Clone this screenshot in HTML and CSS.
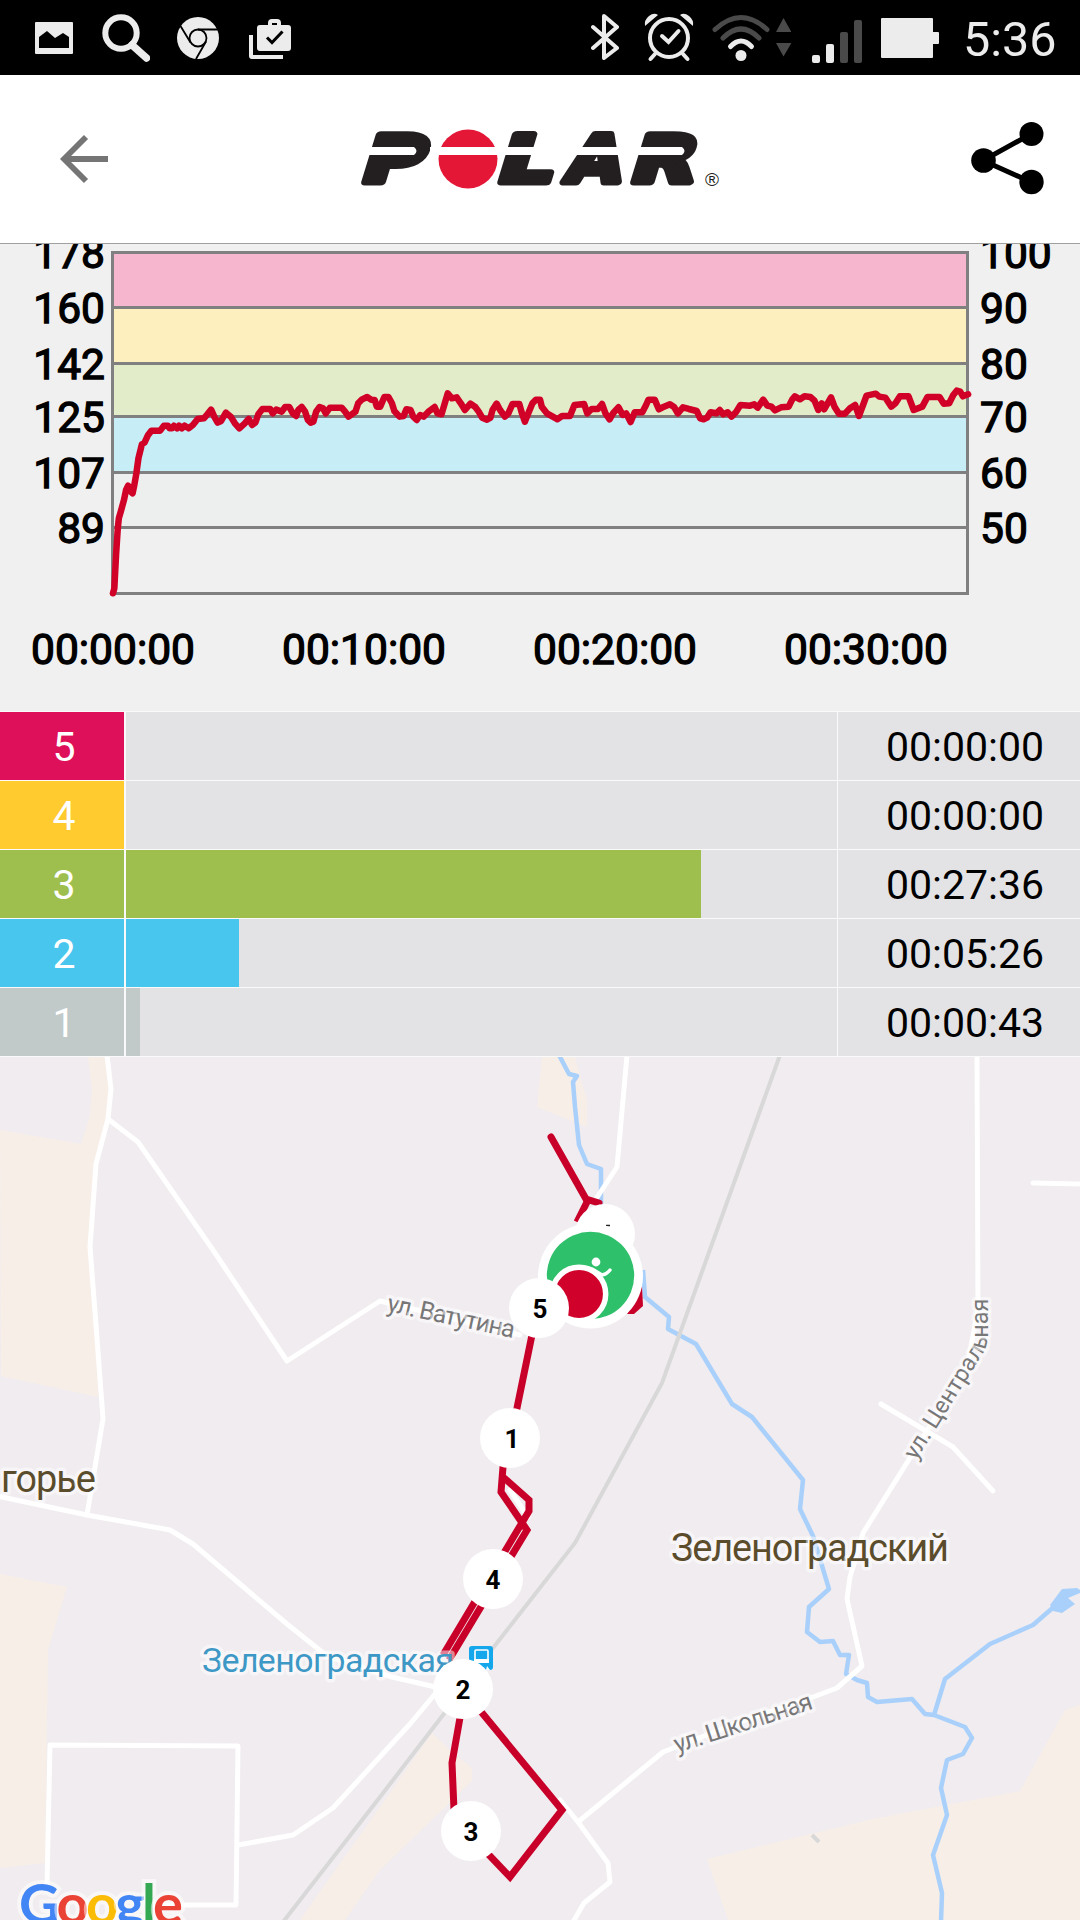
FILE: index.html
```html
<!DOCTYPE html>
<html lang="ru">
<head>
  <meta charset="UTF-8" />
  <title>Polar</title>
  <link rel="stylesheet" href="styles.css">
</head>
<body>
  <div class="statusbar">
    <div class="notifications">
      <svg class="ic-picture" width="38" height="75" viewBox="35 0 38 75"><path fill-rule="evenodd" d="M36 22h36a1 1 0 0 1 1 1v30a1 1 0 0 1-1 1H36a1 1 0 0 1-1-1V23a1 1 0 0 1 1-1zM39 48h30V37l-6-4-8 5-8-7-8 6z"/></svg>
      <svg class="ic-search" width="48" height="75" viewBox="102 0 48 75"><circle cx="121" cy="33" r="15.7" fill="none" stroke="#ececec" stroke-width="6"/><path d="M132 45l14.500 13" stroke="#ececec" stroke-width="7.500" stroke-linecap="round"/></svg>
      <svg class="ic-chrome" width="42" height="75" viewBox="177 0 42 75"><circle cx="198" cy="38" r="21"/><g fill="none" stroke="#000" stroke-width="1.8"><circle cx="198" cy="38" r="8.500"/><path d="M198 29.500h21M190.500 42.500L180.500 26M206 41.500L196 59"/></g></svg>
      <svg class="ic-work" width="43" height="75" viewBox="249 0 43 75"><path fill-rule="evenodd" d="M249 35h4v20h30v4h-31a3 3 0 0 1-3-3zM268 25v-2q0-4 4-4h5q4 0 4 4v2h7a3 3 0 0 1 3 3v20a3 3 0 0 1-3 3h-28a3 3 0 0 1-3-3V28a3 3 0 0 1 3-3zM272 25h5v-2h-5z"/><path d="M267 37.500l5 5 10.500-11" fill="none" stroke="#000" stroke-width="3"/></svg>
    </div>
    <div class="system">
      <svg class="ic-bt" width="28" height="75" viewBox="591 0 28 75"><path d="M593 27l24 21-13 10V16l13 11-24 21" fill="none" stroke="#ececec" stroke-width="4" stroke-linejoin="round" stroke-linecap="round"/></svg>
      <svg class="ic-alarm" width="50" height="75" viewBox="644 0 50 75"><g fill="none" stroke="#ececec" stroke-width="4" stroke-linecap="round"><circle cx="669" cy="38" r="19"/><path d="M655 54l-4.500 5M683 54l4.500 5"/><path d="M662 36l6.500 6 10-11"/></g><path d="M645 26q-1-6 4-10t9-1zM693 26q1-6-4-10t-9-1z"/></svg>
      <svg class="ic-wifi" width="58" height="75" viewBox="712 0 58 75"><circle cx="741" cy="55.500" r="5.500"/><g fill="none" stroke-width="5" stroke-linecap="round"><path d="M730.500 46.500q10.500-11 21 0" stroke="#ececec"/><path d="M723 38q18-18 36 0M715 29.500q26-24 52 0" stroke="#4a4a4a"/></g></svg>
      <svg class="ic-data" width="16" height="75" viewBox="775 0 16 75"><path fill="#4a4a4a" d="M783.500 18l8 14h-15.500zM776 43h15.500l-8 13.500z"/></svg>
      <svg class="ic-signal" width="50" height="75" viewBox="812 0 50 75"><rect x="812" y="55" width="8" height="8" rx="2"/><rect x="826" y="44" width="8" height="19" rx="2"/><g fill="#4a4a4a"><rect x="840" y="32" width="8" height="31" rx="2"/><rect x="854" y="20" width="8" height="43" rx="2"/></g></svg>
      <svg class="ic-battery" width="58" height="75" viewBox="881 0 58 75"><rect x="881" y="18" width="52" height="40" rx="1"/><rect x="932" y="32" width="7" height="12" rx="1"/></svg>
      <span class="clock">5:36</span>
    </div>
  </div>

  <header class="topbar">
    <svg class="back" width="48" height="50" viewBox="60 134 48 50"><path d="M108 159H64M86 137l-22 22 22 22" fill="none" stroke="#757575" stroke-width="5.800"/></svg>
    <svg class="logo" width="358" height="78" viewBox="361 119.500 358 78">
      <g class="logo-letters">
        <text transform="translate(358 181.500) skewX(-17) scale(1.290 1)">P</text>
        <text transform="translate(494 181.500) skewX(-17) scale(1.330 1)">L</text>
        <text transform="translate(563 181.500) skewX(-14) scale(1.100 1)">A</text>
        <text transform="translate(627 181.500) skewX(-17) scale(1.280 1)">R</text>
      </g>
      <circle cx="468" cy="158.500" r="29.500" fill="#e41737"/>
      <path d="M361 146.500h53q5 4 0 8h-53zM430 146.500h192v8H430zM622 146.500h60q5 4 0 8h-60z" fill="#fff"/>
      <text class="reg" x="705" y="185">®</text>
    </svg>
    <svg class="share" width="73" height="74" viewBox="971 122 73 74"><path d="M1031 134l-48 26.500 48 21.500" fill="none" stroke="#000" stroke-width="5"/><circle cx="983.500" cy="160.500" r="12.300"/><circle cx="1031.500" cy="134" r="12"/><circle cx="1031.500" cy="182" r="12.200"/></svg>
  </header>

  <svg class="chart" width="1080" height="467" viewBox="0 244 1080 467">
    <rect x="112.500" y="252.500" width="855" height="55" fill="#f5b6ce"/>
    <rect x="112.500" y="307.500" width="855" height="56" fill="#feefbf"/>
    <rect x="112.500" y="363.500" width="855" height="53" fill="#e2ecc9"/>
    <rect x="112.500" y="416.500" width="855" height="56" fill="#c7eef7"/>
    <rect x="112.500" y="472.500" width="855" height="55" fill="#edefee"/>
    <path class="grid" d="M112.500 252.500h855v341h-855zM112.500 307.500h855M112.500 363.500h855M112.500 416.500h855M112.500 472.500h855M112.500 527.500h855"/>
    <g class="axis axis-left">
      <text x="105" y="268">178</text>
      <text x="105" y="323">160</text>
      <text x="105" y="379">142</text>
      <text x="105" y="432">125</text>
      <text x="105" y="488">107</text>
      <text x="105" y="543">89</text>
    </g>
    <g class="axis">
      <text x="980" y="268">100</text>
      <text x="980" y="323">90</text>
      <text x="980" y="379">80</text>
      <text x="980" y="432">70</text>
      <text x="980" y="488">60</text>
      <text x="980" y="543">50</text>
    </g>
    <g class="axis axis-time">
      <text x="113" y="663.500">00:00:00</text>
      <text x="364" y="663.500">00:10:00</text>
      <text x="615" y="663.500">00:20:00</text>
      <text x="866" y="663.500">00:30:00</text>
    </g>
    <!-- heart rate -->
    <polyline class="pulse" transform="translate(0 235) scale(.3444 .3333)" points="328,1075 332,1060 337,960 342,880 345,850 352,825 360,795 366,765 372,752 378,768 385,775 390,750 396,715 402,670 412,628 420,622 430,600 440,587 465,587 476,572 488,572 492,580 500,580 505,572 514,580 520,572 528,580 536,572 548,580 560,570 574,552 592,550 602,538 613,524 622,545 632,563 642,558 656,533 670,545 682,565 695,580 710,566 722,552 732,570 742,562 750,538 762,522 785,522 792,535 802,524 818,530 828,516 840,516 850,535 860,543 866,525 876,516 886,530 894,555 902,563 910,560 918,530 928,516 938,520 946,535 958,518 992,518 1002,530 1012,545 1032,530 1040,505 1050,494 1066,486 1078,494 1088,495 1094,515 1104,515 1116,486 1128,486 1138,505 1145,528 1160,545 1172,543 1180,523 1192,525 1200,545 1210,555 1220,540 1230,545 1244,530 1252,524 1262,516 1270,535 1282,538 1290,510 1300,475 1312,490 1326,487 1338,505 1350,525 1366,506 1380,516 1390,530 1400,548 1414,554 1424,548 1430,525 1442,506 1452,525 1466,545 1476,535 1488,507 1508,507 1514,530 1524,560 1534,535 1546,505 1556,494 1568,494 1573,515 1588,535 1605,545 1618,553 1632,543 1655,543 1668,510 1696,507 1705,535 1718,522 1736,522 1748,507 1758,535 1770,553 1780,535 1796,517 1808,540 1818,535 1831,561 1843,532 1865,532 1876,510 1883,494 1901,494 1913,523 1928,515 1945,508 1958,517 1968,535 1983,517 2000,522 2023,528 2033,550 2043,553 2053,548 2063,532 2080,535 2090,525 2100,538 2113,532 2124,545 2138,530 2150,510 2178,512 2190,508 2200,518 2216,494 2228,512 2240,515 2250,526 2268,517 2290,515 2300,494 2308,484 2323,493 2336,484 2353,486 2365,497 2376,525 2386,505 2393,523 2413,487 2423,515 2436,536 2453,536 2468,520 2483,510 2494,543 2506,510 2516,482 2543,476 2553,485 2571,488 2588,515 2600,505 2613,484 2638,484 2653,525 2678,515 2693,486 2728,486 2740,506 2756,505 2768,480 2778,467 2788,470 2796,484 2811,478"/>
  </svg>

  <div class="zones">
    <div class="zone z5"><div class="num">5</div><div class="track"></div><div class="time">00:00:00</div></div>
    <div class="zone z4"><div class="num">4</div><div class="track"></div><div class="time">00:00:00</div></div>
    <div class="zone z3"><div class="num">3</div><div class="track"><div class="bar" style="width: 575px"></div></div><div class="time">00:27:36</div></div>
    <div class="zone z2"><div class="num">2</div><div class="track"><div class="bar" style="width: 113px"></div></div><div class="time">00:05:26</div></div>
    <div class="zone z1"><div class="num">1</div><div class="track"><div class="bar" style="width: 14px"></div></div><div class="time">00:00:43</div></div>
  </div>

  <svg class="map" width="1080" height="863" viewBox="0 1057 1080 863">
    <!-- fields -->
    <g fill="#f7eee8">
      <path d="M0 1130l81 14 9-28 2-26-4-33h19l4 32-3 30-12 45-6 83 7 90 1 60-97-21z"/>
      <path d="M0 1574l67 13-19 63-3 213-45 5z"/>
      <path d="M432 1733l20 19 20 16v13l-92 89-35 50h-45z"/>
      <path d="M542 1057l-5 50 50 20v-27l-7-24-5-19z"/>
      <path d="M707 1859l166-40 147-28 45-81 15-5v215H728z"/>
    </g>
    <!-- water -->
    <g class="river">
      <polyline points="559,1055 569,1074 577,1076 573,1082 575,1107 579,1145 587,1164 601,1169 601,1205"/>
      <polyline points="643,1270 645,1297 669,1317 668,1329 696,1344 732,1404 752,1417 803,1480 800,1509 813,1536 829,1589 809,1607 807,1632 820,1642 833,1641 840,1655 849,1655 846,1674 857,1680 867,1683 868,1697 877,1702 912,1699 925,1714 934,1715 965,1727 972,1738 963,1754 947,1760 941,1788 947,1815 933,1855 942,1893 941,1922"/>
      <polyline points="934,1715 945,1679 990,1644 1033,1625 1056,1605"/>
    </g>
    <path fill="#a9d0fb" d="M1050 1605l12-16 15-1 3 2v3l-12 5 7 6-13 9-9-2z"/>
    <!-- railway -->
    <g class="rail">
      <polyline points="780,1055 662,1383 575,1543 493,1648 443,1715 380,1797 283,1922"/>
      <path d="M812 1835l7 7"/>
    </g>
    <!-- roads -->
    <g class="road">
      <polyline points="107,1055 111,1089 108,1119 96,1164 90,1247 97,1338 103,1419 87,1515"/>
      <polyline points="108,1119 138,1142 213,1250 287,1361 380,1301 520,1335"/>
      <polyline points="-3,1496 87,1515 170,1530 193,1544 287,1624 327,1656 392,1677 440,1688 410,1724 333,1808 293,1835 238,1845"/>
      <polyline points="47,1885 50,1745 238,1746 236,1905 150,1905"/>
      <polyline points="627,1055 617,1167 596,1199"/>
      <polyline points="977,1055 978,1310 967,1367 908,1461 863,1533 850,1577 847,1599 862,1666 837,1688 813,1697 740,1722 663,1752 578,1822"/>
      <polyline points="560,1800 578,1822 608,1863 610,1882 584,1903 573,1922"/>
      <polyline points="881,1404 923,1429 953,1447 993,1491"/>
      <path d="M1033 1183l50 1"/>
      <path d="M510 1490l18 27"/>
    </g>
    <!-- track -->
    <g class="route">
      <polyline points="551,1137 586,1199 599,1203" stroke-linecap="round"/>
      <polyline points="588,1200 577,1222"/>
      <polyline points="533,1330 517,1408 503,1467 501,1492 527,1530 449,1660"/>
      <polyline points="503,1477 529,1500 529,1511 443,1655"/>
      <polyline points="461,1712 452,1763 454,1810 471,1836 510,1877 562,1810 478,1708"/>
    </g>
    <path fill="#c80029" d="M642 1286l1 20-9 8h-7z"/>
    <!-- labels -->
    <g class="label">
      <text class="street" x="386" y="1311" textLength="130" transform="rotate(12 386 1311)">ул. Ватутина</text>
      <text class="street" x="677" y="1753" textLength="144" transform="rotate(-18 677 1753)">ул. Школьная</text>
      <path id="central" d="M916 1461L982 1355Q988 1345 988 1335V1280" fill="none"/>
      <text class="street street-long"><textPath href="#central">ул. Центральная</textPath></text>
      <text class="town" x="1" y="1492" textLength="95">горье</text>
      <text class="town" x="671" y="1561" textLength="278">Зеленоградский</text>
      <text class="station" x="202" y="1672" textLength="252">Зеленоградская</text>
    </g>
    <rect x="469" y="1646" width="24" height="24" rx="3" fill="#14a7ec"/>
    <rect x="475" y="1650" width="13" height="11" rx="1" fill="none" stroke="#fff" stroke-width="1.600"/>
    <path d="M474 1659h15v4h-15zM476 1666l-3 4h4zM487 1666l3 4h-4z" fill="#fff"/>
    <!-- km markers -->
    <circle cx="605" cy="1234" r="30" fill="#fff"/>
    <path d="M606 1225.500h4" stroke="#222" stroke-width="1.500"/>
    <circle cx="590.500" cy="1276" r="52.500" fill="#fff"/>
    <circle cx="590.500" cy="1275.500" r="43.700" fill="#2ec06a"/>
    <circle cx="596" cy="1262" r="4.400" fill="#fff"/>
    <path d="M592 1269l10 6q4 0 8-5" fill="none" stroke="#fff" stroke-width="3.500" stroke-linecap="round"/>
    <circle cx="579" cy="1294" r="26.700" fill="#d0022b" stroke="#fff" stroke-width="5.500"/>
    <g class="km">
      <circle cx="539" cy="1308" r="30"/><text x="540" y="1318">5</text>
      <circle cx="510" cy="1438" r="30"/><text x="512" y="1448">1</text>
      <circle cx="493" cy="1579" r="30"/><text x="493" y="1589">4</text>
      <circle cx="463" cy="1689" r="30"/><text x="463" y="1699">2</text>
      <circle cx="471" cy="1831" r="30"/><text x="471" y="1841">3</text>
    </g>
    <text class="google" x="19" y="1924" textLength="164"><tspan fill="#4285f4">G</tspan><tspan fill="#ea4335">o</tspan><tspan fill="#fbbc05">o</tspan><tspan fill="#4285f4">g</tspan><tspan fill="#34a853">l</tspan><tspan fill="#ea4335">e</tspan></text>
  </svg>
</body>
</html>
```

FILE: styles.css
```css
body {
  font-family: Roboto, "Liberation Sans", sans-serif;
  background: #f0f0f0;
  color: #000;
  margin: 0;
  width: 1080px;
  height: 1920px;
  overflow: hidden;
}
svg {
  display: block;
  flex: none;
}
.statusbar {
  display: flex;
  justify-content: space-between;
  height: 75px;
  padding: 0 25px 0 35px;
  background: #000;
  fill: #ececec;
}
.notifications,
.system {
  display: flex;
}
.notifications {
  gap: 29px;
}
.ic-chrome {
  margin-left: -2px;
}
.ic-work {
  margin-left: 1px;
}
.ic-alarm {
  margin-left: 25px;
}
.ic-wifi {
  margin-left: 18px;
}
.ic-data {
  margin-left: 5px;
}
.ic-signal {
  margin-left: 21px;
}
.ic-battery {
  margin-left: 19px;
}
.clock {
  width: 92px;
  margin-left: 24px;
  color: #ececec;
  font-size: 48.5px;
  line-height: 79px;
}
.topbar {
  display: flex;
  justify-content: space-between;
  align-items: center;
  box-sizing: border-box;
  height: 169px;
  padding: 0 36px 0 60px;
  background: #fff;
  border-bottom: 1px solid #a0a0a0;
}
.logo {
  overflow: visible;
}
.logo-letters {
  font-family: "DejaVu Sans", sans-serif;
  font-weight: bold;
  font-size: 65px;
  fill: #231f20;
  stroke: #231f20;
  stroke-width: 7;
  stroke-linejoin: round;
}
.reg {
  font-family: "Liberation Sans", sans-serif;
  font-size: 19px;
  fill: #231f20;
}
.grid {
  fill: none;
  stroke: #808080;
  stroke-width: 3;
}
.axis {
  font-size: 42.5px;
  stroke: #000;
  stroke-width: 1.3;
}
.axis-left {
  text-anchor: end;
}
.axis-time {
  text-anchor: middle;
}
.pulse {
  fill: none;
  stroke: #d10027;
  stroke-width: 6.5;
  stroke-linejoin: round;
  stroke-linecap: round;
  vector-effect: non-scaling-stroke;
}
.zones {
  display: flex;
  flex-direction: column;
  gap: 1px;
  padding: 1px 0;
  background: #fafafa;
}
.zone {
  display: flex;
  height: 68px;
  font-size: 41px;
  line-height: 70px;
  text-align: center;
}
.num {
  width: 120px;
  padding-left: 4px;
  margin-right: 2px;
  color: #fff;
}
.track {
  width: 711px;
  margin-right: 1px;
  background: #e3e3e5;
}
.bar {
  height: 68px;
}
.time {
  flex: 1;
  padding-left: 12px;
  background: #e3e3e5;
}
.z5 .num {
  background: #de1059;
}
.z4 .num {
  background: #ffcb2f;
}
.z3 .num,
.z3 .bar {
  background: #9ebf4e;
}
.z2 .num,
.z2 .bar {
  background: #48c6ee;
}
.z1 .num,
.z1 .bar {
  background: #c1cac8;
}
.map {
  background: #f0ecef;
}
.river {
  fill: none;
  stroke: #a9d0fb;
  stroke-width: 4.5;
  stroke-linejoin: round;
}
.rail {
  fill: none;
  stroke: #d9d8d9;
  stroke-width: 4;
}
.road {
  fill: none;
  stroke: #fff;
  stroke-width: 5;
  stroke-linejoin: round;
  stroke-linecap: round;
}
.route {
  fill: none;
  stroke: #c80029;
  stroke-width: 7;
}
.label text {
  stroke: rgba(255, 255, 255, 0.5);
  stroke-width: 7;
  stroke-linejoin: round;
  paint-order: stroke;
}
.street {
  font-size: 25px;
  fill: #777;
}
.street-long {
  font-size: 23.5px;
}
.town {
  font-size: 38px;
  fill: #5b4d2c;
}
.station {
  font-size: 34px;
  fill: #3d98c6;
}
.km {
  font-size: 26px;
  font-weight: bold;
  text-anchor: middle;
}
.km circle {
  fill: #fff;
}
.google {
  font-family: Lato, sans-serif;
  font-size: 56px;
  font-weight: bold;
  stroke: rgba(255, 255, 255, 0.5);
  stroke-width: 8;
  paint-order: stroke;
}
```
